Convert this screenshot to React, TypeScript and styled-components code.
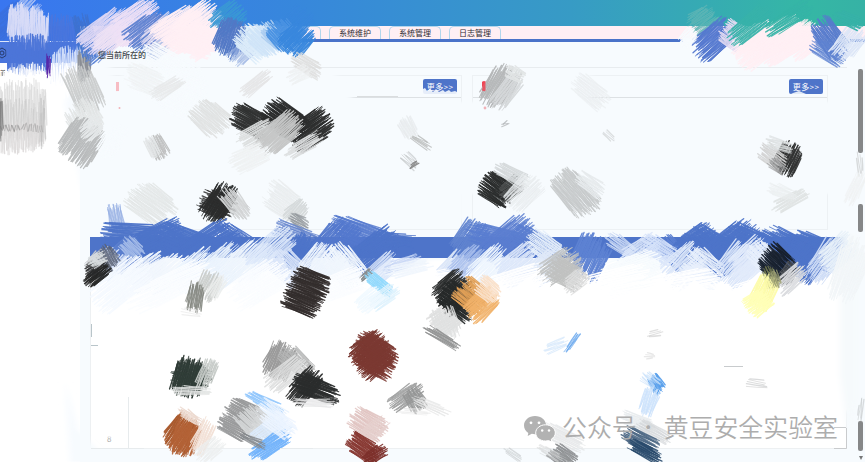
import React from 'react';
import styled, { createGlobalStyle } from 'styled-components';

const GlobalStyle = createGlobalStyle`
  * { box-sizing: border-box; }
  body { margin: 0; overflow: hidden; background: #fff; font-family: "Noto Sans CJK SC", sans-serif; }
`;
const Page = styled.div`
  position: relative; width: 865px; height: 462px; overflow: hidden;
  display: flex; flex-direction: column; background: #fff;
`;
const Header = styled.header`
  height: 26px; flex: none;
  background: linear-gradient(90deg, #3976f0 0%, #3787dc 34%, #379bc5 66%, #35b7a5 93%, #36b2a5 100%);
`;
const Body = styled.div` flex: 1; min-height: 0; display: flex; `;
const Sidebar = styled.aside`
  width: 80px; flex: none; background: #fff; font-size: 6px; color: #555;
`;
const SideTop = styled.div` height: 16px; background: #3b73e5; border-bottom: 1px solid #dde6fa; `;
const SideTitle = styled.div`
  height: 21px; background: #4b76dc; display: flex; align-items: center;
  svg { margin-left: -3px; }
`;
const SideText = styled.div` margin: 4px 0 0; line-height: 11px; `;
const Content = styled.div` flex: 1; min-width: 0; display: flex; flex-direction: column; background: #f7fbfe; `;
const Tabs = styled.nav`
  height: 16px; flex: none; display: flex; align-items: flex-end; gap: 8px; padding-left: 189px;
  background: #ffeff4; border-bottom: 3px solid #4a73c9;
`;
const Tab = styled.div`
  width: 52px; height: 13px; border: 1px solid #b2d6ec; border-bottom: 0; border-radius: 5px 5px 0 0;
  display: flex; align-items: center; justify-content: center;
  font-size: 8px; line-height: 12px; color: #302b31; white-space: nowrap; font-weight: 400;
`;
const Main = styled.div` display: flex; flex: 1; min-height: 0; `;
const Work = styled.main` width: 767px; padding-left: 10px; display: flex; flex-direction: column; flex: none; `;
const Crumb = styled.div`
  height: 26px; flex: none; border-bottom: 1px solid #e8ecef; padding-left: 8px;
  font-size: 8px; line-height: 25px; color: #45494d; font-weight: 500;
  span { position: relative; z-index: 1; }
`;
const Panels = styled.section` display: flex; gap: 10px; padding: 7px 19px 7px 16px; height: 169px; flex: none; `;
const Panel = styled.div` width: 356px; height: 155px; border: 1px solid #edf1f4; `;
const PanelHead = styled.div`
  height: 22px; border-bottom: 1px solid #dde1e4; display: flex; align-items: center;
  justify-content: space-between; padding: 0 4px 0 9px;
`;
const Mark = styled.i<{ $tone: string }>` width: 3px; height: 10px; background: ${p => p.$tone}; `;
const More = styled.button`
  height: 15px; width: 34px; border: 0; border-radius: 2px; background: #4e74c9; color: #fff;
  font: 400 8px/15px "Noto Sans CJK SC", sans-serif; padding: 0; white-space: nowrap; letter-spacing: .4px;
`;
const Band = styled.div` height: 21px; flex: none; background: #4e74c9; `;
const Table = styled.div`
  margin-top: 5px; height: 186px; border: 1px solid #edf0f2; background: #fff;
  display: flex; align-items: flex-end; padding: 0 0 4px 16px; font-size: 8px; color: #aaa;
`;
const ScrollRail = styled.div` flex: 1; display: flex; flex-direction: column; align-items: center; padding: 27px 0 0 9px; `;
const Thumb = styled.i<{ $h: number; $gap: number }>`
  width: 5px; height: ${p => p.$h}px; margin-bottom: ${p => p.$gap}px; border-radius: 2px; background: #868788; flex: none;
`;
const Down = styled.i` border: 2.5px solid transparent; border-top: 4px solid #777; `;
const Overlay = styled.svg` position: absolute; inset: 0; pointer-events: none; `;
const Brand = styled.div`
  position: absolute; left: 524px; top: 410px; display: flex; align-items: center; gap: 6px;
  height: 36px; color: #adadad; font-size: 24.9px; line-height: 36px; white-space: pre;
`;
const BrandName = styled.span` display: flex; font-weight: 350; transform: translateY(-2px); `;
const Dot = styled.span` width: 27px; text-align: center; padding-right: 4px; font-size: 18px; `;

/* x, y, spread across the hatch, length along it, angle in degrees, color, opacity, pitch */
type Smear = [number, number, number, number, number, string, number?, number?];

const rng = (seed: number) => () => {
  seed = (seed * 16807) % 2147483647;
  return seed / 2147483647;
};

function Hatch({ s, seed }: { s: Smear; seed: number }) {
  const [x, y, spread, length, angle, color, opacity = 1, pitch = 1] = s;
  const rand = rng(seed * 7919 + 31);
  rand();
  const skew = (rand() - 0.5) * 0.4;
  const bundles = ['', '', ''];
  let k = 0;
  for (let t = -spread / 2; t <= spread / 2; t += pitch * 0.82) {
    const edge = Math.abs(t) / (spread / 2);
    const half = (length / 2) * (1 - 0.25 * Math.pow(edge, 4));
    const a = -half + (rand() - 0.3) * length * 0.25 + t * skew;
    const b = half - (rand() - 0.3) * length * 0.25 + t * skew;
    const bend = (rand() - 0.5) * 2.6;
    const mid = (a + b) / 2;
    bundles[k++ % 3] += `M${a.toFixed(1)} ${(t + bend).toFixed(1)}Q${mid.toFixed(1)} ${(t + rand() - 0.5).toFixed(1)} ${b.toFixed(1)} ${(t - bend).toFixed(1)}`;
  }
  return (
    <g transform={`translate(${x} ${y}) rotate(${angle})`} stroke={color} strokeLinecap="round" fill="none">
      <path d={bundles[0]} strokeWidth={1.35} strokeOpacity={opacity * 0.95} />
      <path d={bundles[1]} strokeWidth={0.9} strokeOpacity={opacity * 0.85} />
      <path d={bundles[2]} strokeWidth={1.1} strokeOpacity={opacity * 0.9} />
    </g>
  );
}

const W = '#fff';
const P = '#f7fbfe';
const B = '#4e74c9';
const K = '#2a2c2c';

const headerSmears: Smear[] = [
  [9, 20, 22, 40, -40, '#3b6fd9', .7], [27, 13, 26, 28, -48, '#a9c0f5', .8],
  [28, 27, 40, 40, 90, '#d8dcf7', 1, .7], [28, 55, 42, 37, 90, '#4d75d8', 1, .7],
  [62, 35, 27, 37, 90, '#4b76dc', .9], [63, 66, 25, 34, 90, '#d5e1fb'],
  [64, 80, 30, 32, 90, W], [48, 66, 4, 22, 90, '#5524a5'],
  [84, 65, 13, 32, 90, '#868a91'], [85, 36, 18, 42, 75, '#3e72cf'],
  [98, 46, 24, 36, -40, '#5b83d6', .8],
  [106, 31, 28, 53, -38, '#dcd6f4', 1, .8], [112, 38, 22, 38, -38, '#eee2f4'],
  [135, 23, 32, 50, -35, '#eee0f5', 1, .8],
  [147, 31, 28, 42, -38, '#5f82d0'], [163, 34, 27, 42, -42, '#e2dcf2', .9],
  [158, 50, 14, 22, -40, '#a9bde4', .6], [180, 31, 38, 49, -33, '#ffeff4', 1, .7],
  [201, 30, 46, 48, -38, '#ffeff4', 1, .6], [196, 40, 30, 42, 15, '#ffeff4', 1, .7],
  [228, 18, 25, 34, -40, '#3a98d4'], [230, 38, 28, 36, -70, '#5278c5', 1, .7],
  [243, 53, 18, 26, -45, '#9db5e2', .7],
  [254, 43, 28, 36, 40, '#dcecfa', 1, .8], [264, 40, 25, 34, 45, '#cfe4f8'],
  [272, 35, 17, 22, 45, '#a9cbf0'], [294, 24, 25, 35, -45, '#3987dd', .8],
  [284, 36, 26, 32, 45, '#4a92e2', 1, .8], [297, 39, 28, 30, -45, '#3987dd', 1, .7],
  [703, 21, 25, 27, -35, '#5fb6b6', .8], [714, 40, 27, 43, -42, '#5478cf', 1, .75],
  [733, 35, 25, 25, 35, '#e1daf1'], [757, 45, 35, 46, -35, '#ffeff4', 1, .7],
  [782, 40, 36, 46, -30, '#ffeff4', 1, .65], [802, 40, 31, 38, -40, '#ffeff4', 1, .7],
  [750, 26, 20, 47, -38, '#38b2aa'], [790, 18, 16, 50, -32, '#36b4a7'],
  [830, 38, 24, 40, 55, '#567bcc', 1, .75], [828, 53, 16, 36, 32, '#5f83d1', .85],
  [849, 43, 23, 35, -50, '#dce6f7'],
  [848, 20, 13, 28, 25, '#37b2a8'], [688, 38, 14, 20, -45, P],
];
const upperSmears: Smear[] = [
  [23, 84, 44, 35, 90, W], [23, 108, 46, 52, 90, '#dcdcdc', .8],
  [22, 124, 45, 44, 90, '#c2c2c2', .45, 1.6], [22, 137, 42, 30, 90, '#dddada', .8],
  [10, 128, 18, 6, 90, '#777', .5, 2.4], [32, 128, 20, 8, 90, '#777', .4, 2.6],
  [42, 124, 6, 55, 90, '#bbb', .6, 1.5], [1, 117, 3, 42, 90, '#777', .8],
  [84, 90, 30, 46, 68, '#c8caca', .9],
  [85, 120, 32, 36, 60, '#e3e6e6'], [82, 142, 38, 40, -55, '#b8babb', 1, .8],
  [92, 129, 18, 24, -40, '#e6e9ea'],
  [112, 142, 20, 36, -55, P], [163, 77, 52, 65, 30, P], [180, 94, 45, 52, 25, P],
  [158, 147, 16, 23, 60, '#bfc0c0'], [152, 147, 10, 20, 65, '#e3e6e7'],
  [145, 80, 24, 37, 25, '#eff2f3', .65], [168, 88, 13, 34, -30, '#e7e9ea', .9],
  [256, 84, 12, 34, -38, '#e4e4e5', .9], [306, 65, 16, 32, 30, '#dddddc', .8],
  [300, 74, 14, 24, -30, '#eef0f1', .7],
  [210, 118, 30, 36, 40, '#e0e2e2'], [250, 121, 25, 36, 28, '#303131', 1, .65],
  [284, 120, 30, 42, 35, '#2a2b2b', 1, .65], [311, 130, 29, 42, -35, '#2c2d2d', 1, .65],
  [258, 134, 20, 40, -30, '#dcdede'], [280, 133, 26, 46, -42, '#c5c6c6', 1, .7],
  [304, 146, 13, 38, -32, '#dddfe0'], [250, 158, 22, 38, -25, '#eff2f3'],
  [408, 128, 15, 22, 60, '#e6e9eb', .7], [421, 142, 7, 22, 30, '#a8a9a8', .7, 1.6],
  [410, 161, 11, 18, 40, '#c2c5c6', .7, 2], [414, 165, 3, 10, -45, '#888'],
  [500, 86, 28, 42, -60, '#b5b7b8', 1, .8],
  [507, 92, 18, 38, -55, '#d5d8da'], [515, 74, 13, 20, 30, '#e2e5e6'],
  [590, 92, 22, 39, 38, '#ebeff1', .8], [609, 136, 6, 12, 35, '#c5c8c9', .6, 2.2],
  [788, 159, 24, 30, -65, '#303131', 1, .7], [772, 157, 18, 28, 38, '#d1d2d2', .9],
  [779, 145, 11, 26, 15, '#dce0e1', .8], [777, 166, 10, 20, 40, '#9a9b9c', .7],
  [790, 201, 13, 36, -30, '#dfe3e3', .95], [782, 192, 12, 28, 20, '#eaeeef', .7],
  [151, 204, 34, 44, 35, '#e3e6e6', .9], [219, 203, 24, 38, -58, K, 1, .65],
  [217, 205, 24, 34, 25, '#2c2d2d', .9], [235, 204, 18, 34, 50, '#d2d4d5'],
  [284, 202, 28, 40, 35, '#e8ebed', .8], [296, 213, 18, 25, -48, '#d5d9da'],
  [299, 222, 12, 20, 35, '#90959a', .75], [497, 190, 27, 32, 35, K, 1, .65],
  [511, 189, 18, 24, -35, '#515454', .75], [512, 175, 14, 34, 30, '#d5d9db'],
  [524, 193, 26, 36, -45, '#e9edef', .8], [575, 193, 30, 48, 50, '#c7cacb', 1, .8],
  [590, 184, 15, 28, 35, '#e6eaec'], [505, 124, 3, 8, -20, '#a5a8aa', .7, 1.6],
];
const bandSmears: Smear[] = [
  [116, 219, 14, 28, 80, '#98b1e4', .85], [133, 238, 28, 58, 5, B, 1, .7],
  [157, 243, 34, 56, -25, B, 1, .65], [187, 242, 26, 58, 22, B, 1, .65],
  [209, 244, 30, 56, -32, B, 1, .65], [236, 238, 18, 44, 35, B],
  [125, 255, 26, 34, -38, '#5d81cf'],
  [297, 236, 18, 46, 22, '#6282cc', .85], [301, 254, 26, 38, -65, B, 1, .7],
  [337, 240, 32, 42, -48, '#5378cc', 1, .8], [363, 235, 24, 63, 20, '#5479ce', .9, .8],
  [374, 252, 30, 54, -37, B, 1, .7], [399, 240, 12, 34, 5, B],
  [470, 239, 28, 38, -55, '#6184cf', .95, .8], [498, 239, 22, 62, 15, '#597dd0', .9, .8],
  [505, 239, 24, 56, -40, '#5b7ed0', .9, .8], [532, 241, 22, 48, 27, '#5b7ed0'],
  [590, 257, 34, 40, -65, '#5e83d3', 1, .8], [674, 254, 20, 36, 50, '#5b80d1'],
  [696, 245, 30, 44, -35, B, 1, .7], [710, 250, 36, 54, 32, B, 1, .7],
  [733, 248, 38, 58, -38, B, 1, .65], [756, 247, 30, 60, 25, B, 1, .65],
  [788, 252, 36, 60, 28, B, 1, .65], [812, 250, 30, 48, 22, B, 1, .7],
  [806, 262, 34, 34, -50, B, 1, .7], [108, 264, 25, 32, -48, '#dce7fa'],
  [132, 249, 18, 24, 45, '#a5bce9'], [148, 272, 28, 43, -35, '#eff5fd'],
  [170, 274, 30, 48, -40, '#f2f7fd'], [196, 270, 28, 48, -42, '#edf5fe'],
  [224, 267, 34, 44, -42, '#eaf3fd'], [251, 260, 33, 46, -42, '#eef5fd'],
  [271, 250, 26, 52, -42, '#dce8fa', .95], [288, 268, 28, 38, 45, '#dae5f9'],
  [321, 266, 36, 44, -52, '#edf4fd', 1, .85], [345, 266, 30, 43, 50, '#f0f6fd', 1, .85],
  [382, 270, 20, 36, -45, '#dbe6fa', .9], [402, 264, 10, 36, -20, '#c6d5f4', .8],
  [408, 269, 13, 46, -15, '#f0f6fd', .9],
  [452, 267, 18, 32, -50, '#d9e5f8'], [467, 262, 20, 36, -45, '#a9bfec', .9],
  [490, 268, 30, 44, -45, '#edf5fe'], [518, 266, 30, 44, -40, '#dce7fa'],
  [546, 248, 23, 40, 35, '#e6effb'], [547, 267, 26, 36, -43, '#dfe9f8'],
  [622, 246, 14, 34, 35, '#cbdaf5', .9], [639, 251, 19, 42, -35, '#dbe6fa', .95],
  [645, 264, 18, 47, -15, '#f1f7fd'], [660, 250, 20, 40, 30, '#d5e2fa', .95],
  [631, 274, 35, 60, -20, '#f8fcfe'],
  [684, 266, 32, 42, -45, '#dde8fa'], [704, 268, 30, 40, 38, '#e8f0fc'],
  [738, 265, 34, 42, -50, '#d9e5f9'], [750, 260, 30, 42, -40, '#e2ebfb'],
  [764, 258, 24, 34, 45, '#e8f0fc'], [826, 260, 24, 46, -55, '#cddbf6'],
  [838, 253, 26, 38, -40, '#e8f1f9'], [850, 270, 30, 60, -70, '#f2f6f8'],
];
const lowerSmears: Smear[] = [
  [121, 284, 33, 61, -38, '#f5faff'], [171, 286, 26, 85, -24, '#fbfdff'],
  [259, 284, 32, 59, -32, '#fbfdff'], [340, 285, 24, 53, -20, '#fbfdff'],
  [430, 286, 26, 64, -10, W], [519, 285, 32, 69, -15, W],
  [618, 289, 40, 63, -12, W], [684, 292, 40, 75, -10, W], [765, 296, 38, 71, -15, W],
  [98, 264, 20, 25, -45, '#c6c9cd'], [108, 258, 18, 22, 55, '#5b6376', .85],
  [98, 275, 13, 28, -38, '#252626', 1, .7], [92, 269, 13, 14, -28, '#2a2b2c', .8],
  [97, 260, 12, 18, -25, '#d8dddf'],
  [209, 286, 22, 28, -65, '#c9ccca', .9], [195, 297, 16, 27, 100, '#858882', .95],
  [217, 287, 13, 24, -60, '#eceeed', .8], [306, 292, 44, 37, 22, '#322c2b', 1, .65],
  [366, 275, 5, 14, -40, '#85898a'], [379, 284, 12, 32, 40, '#8ed8fc'],
  [384, 297, 15, 31, -35, '#def2fd', .9], [370, 300, 18, 28, -40, '#f0f9ff', .9],
  [448, 318, 26, 34, -35, '#dadbdb', .75], [454, 292, 34, 36, -40, K, 1, .7],
  [458, 301, 28, 38, 35, '#262929', 1, .7], [472, 296, 29, 32, 40, '#e1a057', .97, .7],
  [482, 305, 24, 33, -42, '#f1b26a', .95, .8], [488, 290, 20, 25, 40, '#fae0c9'],
  [446, 324, 24, 33, 70, '#e0e1e1', .9], [442, 338, 9, 38, 32, '#929393'],
  [560, 266, 26, 40, -35, '#bfc1c1', .9], [566, 274, 24, 35, 30, '#c0c1c0'],
  [576, 281, 17, 26, -42, '#dcdddd', .9], [777, 264, 30, 33, 42, '#17202d', 1, .65],
  [788, 274, 14, 24, -55, '#55585c', .8], [792, 279, 18, 32, -42, '#dadcdf'],
  [770, 279, 11, 23, 70, '#757b51', .8], [764, 293, 22, 34, -65, '#fdfba8', .95, .8],
  [758, 303, 22, 24, -35, '#ffffb8', 1, .8], [775, 279, 9, 17, 65, '#a1a477', .8],
  [372, 355, 38, 38, -38, '#75362f', 1, .65], [375, 356, 35, 42, 30, '#7b3932', 1, .65],
  [189, 377, 30, 37, -75, '#2c3833', 1, .7], [191, 376, 22, 36, 10, '#303d38', .9],
  [207, 374, 15, 28, -70, '#c5cac7'], [192, 391, 9, 38, 0, '#e3e5e4', .9],
  [182, 434, 30, 34, -55, '#a9592c', 1, .7], [186, 437, 25, 34, -75, '#b46337', .95],
  [190, 417, 9, 25, 33, '#ecd9cf'], [203, 437, 16, 35, -65, '#f2e0d6'],
  [210, 450, 18, 28, -45, '#eceeee', .8], [280, 361, 28, 34, -65, '#999', 1, .8],
  [296, 361, 20, 34, 40, '#b4b5b5', .9], [286, 374, 20, 44, -40, '#dddede', .9],
  [305, 387, 22, 38, -50, '#303131', 1, .7], [316, 389, 20, 44, 20, K, 1, .7],
  [314, 403, 8, 38, 5, '#e7e8e9', .8], [264, 402, 10, 38, 28, '#8cc4fd', .9],
  [273, 416, 22, 32, 35, '#e8f2fe'], [239, 419, 38, 32, 30, '#999a9b', 1, .75],
  [256, 424, 27, 38, 45, '#d3d5d6', 1, .8], [270, 432, 22, 38, -35, '#dcebfd', .9],
  [270, 446, 17, 40, -33, '#72b3fb', 1, .8], [279, 424, 20, 34, 35, '#edf5ff', .9],
  [253, 441, 7, 26, 25, '#85898d', .9],
  [368, 424, 24, 36, 32, '#dfc2bf', .9], [370, 434, 16, 42, -40, '#e5d0ce', .9],
  [363, 448, 20, 32, 34, '#873832', 1, .75], [375, 455, 13, 25, -30, '#7c302b'],
  [406, 397, 17, 36, -35, '#a2a3a3'], [415, 400, 18, 22, 60, '#959696', .9],
  [430, 406, 9, 38, 25, '#e4e5e5', .8, 1.3], [415, 412, 6, 30, 5, '#e9e9e9', .7, 1.6],
  [572, 343, 4, 24, -52, '#6aa8ed', .9, 1.2], [556, 346, 10, 24, -20, '#d6e8fb', .8, 1.4],
  [656, 384, 13, 17, 55, '#569eeb', 1, .8], [649, 402, 15, 28, -70, '#cbe2fb', .9],
  [650, 380, 12, 18, 40, '#c9e1fb', .7, 1.3], [638, 422, 13, 32, 22, '#e8ebee', .9],
  [653, 431, 12, 36, 30, '#d4d7da', .8], [640, 440, 16, 36, 28, '#506a86', 1, .8],
  [645, 451, 12, 34, 28, '#294a6c', .95, .8], [564, 438, 16, 44, 28, '#e4e6e7', .8],
  [562, 456, 18, 25, 35, '#8f9193', .95, .8], [550, 454, 9, 28, 28, '#d4d6d7', .6, 1.4],
  [513, 455, 7, 22, 35, '#bfc3c5', .6, 1.8], [757, 384, 9, 20, 5, '#9fa1a2', .4, 2.3],
  [655, 334, 7, 15, -15, '#aaa', .4, 2.2], [650, 356, 5, 10, 15, '#ccc', .5, 2],
  [192, 313, 7, 20, 10, '#ddd', .5, 2.5], [860, 165, 5, 24, 85, '#c3c4c5', .65, 2],
  [856, 188, 12, 33, -65, '#f0f2f3', .8], [861, 410, 5, 24, -85, '#c0c3c5', .6, 1.6],
];

export default function App() {
  const all = [...headerSmears, ...upperSmears, ...bandSmears, ...lowerSmears];
  return (
    <Page>
      <GlobalStyle />
      <Header />
      <Body>
        <Sidebar>
          <SideTop />
          <SideTitle>
            <svg width="10" height="12" viewBox="0 0 10 12" fill="none" stroke="#273b6b"><path d="M5 1L9 3.5V8.5L5 11L1 8.5V3.5Z" /><circle cx="5" cy="6" r="2" /></svg>
          </SideTitle>
          <SideText>首</SideText>
        </Sidebar>
        <Content>
          <Tabs><Tab>业务</Tab><Tab>系统维护</Tab><Tab>系统管理</Tab><Tab>日志管理</Tab></Tabs>
          <Main>
            <Work>
              <Crumb><span>您当前所在的</span></Crumb>
              <Panels>
                <Panel><PanelHead><Mark $tone="#f7bdc4" /><More>更多&gt;&gt;</More></PanelHead></Panel>
                <Panel><PanelHead><Mark $tone="#ee4656" /><More>更多&gt;&gt;</More></PanelHead></Panel>
              </Panels>
              <Band />
              <Table>8</Table>
            </Work>
            <ScrollRail><Thumb $h={84} $gap={51} /><Thumb $h={28} $gap={189} /><Thumb $h={30} $gap={5} /><Down /></ScrollRail>
          </Main>
        </Content>
      </Body>
      <Overlay width="865" height="462" viewBox="0 0 865 462">
        <defs><filter id="soft"><feGaussianBlur stdDeviation="3 1.2" /></filter></defs>
        <g filter="url(#soft)">
          <path d="M78 46L65 105L80 178L90 225L121 225L113 120L113 70L95 50Z" fill={P} />
          <path d="M125 71H335L342 94H352V101H410V200L402 226H90L112 200V95Z" fill={P} />
          <path d="M396 102H466V220H396Z" fill={P} />
          <path d="M495 71H590V102H835V194H466V102H495Z" fill={P} />
          <path d="M98 262H395L410 266H422L430 260H852V405L806 437H100Z" fill={W} />
          <path d="M65 380L78 430L110 462H70Z" fill={P} />
          <path d="M840 234H856V400L848 435L840 375Z" fill="#f6fafc" />
        </g>
        <path d="M90 237H838V258H90Z" fill={B} />
        <path d="M683 38H850V45H683ZM80 27H302V45H80Z" fill={P} />
        <path d="M720 27H826V46L735 52ZM90 27H225V46H90Z" fill="#ffeff4" />
        {all.map((s, i) => <Hatch key={i} s={s} seed={i + 1} />)}
        <g fill="none" strokeWidth="1">
          <path d="M91.5 324V337M91 345.5H98" stroke="#b9c5ca" />
          <path d="M128.5 397V448M91 448.5H144M280 448.5H313" stroke="#e7ebed" />
          <path d="M846.5 428V448.5H834M834 427.5H846" stroke="#c9cbcd" />
          <path d="M724 366.5H743" stroke="#c8cbcd" />
          <path d="M357 96.5H398" stroke="#dadddf" />
        </g>
        <path d="M423 89L425 88L427 91L430 89L433 92L436 89L439 92L443 90L445 92L449 90L451 92L455 91L457 92V94H423Z" fill={P} fillOpacity=".9" />
        <path d="M793 93L799 91L806 94H791Z" fill="#e1eaf6" />
        <g fill="#f1b2b8"><circle cx="119.5" cy="108" r="1" /><circle cx="485" cy="108" r="1.4" /></g>
        <path d="M482.5 81H485.5V91H482.5Z" fill="#ee4656" fillOpacity=".85" />
        <path d="M116 82H119V91H116Z" fill="#f7bdc4" />
      </Overlay>
      <Brand>
        <svg width="32" height="27" viewBox="0 0 32 27">
          <path d="M11 1C4.8 1 0 5.2 0 10.4c0 3.1 1.7 5.8 4.3 7.5L3.7 21l4.1-2.2c1 .3 2.1.4 3.3.4 6.2 0 11-4 11-8.9C22.1 5.2 17.2 1 11 1Z" fill="#b2b2b2" />
          <path d="M21.5 9.8c-5.5 0-9.8 3.6-9.8 8.1s4.3 8.1 9.8 8.1c1 0 2-.1 3-.4l3.4 1.4-.6-2.8c2.5-1.5 4-3.7 4-6.3 0-4.5-4.3-8.1-9.8-8.1Z" fill="#b2b2b2" stroke="#fff" />
          <g fill="#fff"><circle cx="7" cy="7.8" r="1.4" /><circle cx="15" cy="7.8" r="1.4" /><circle cx="18.2" cy="15.5" r="1.2" /><circle cx="25" cy="15.5" r="1.2" /></g>
        </svg>
        <BrandName><span>公众号</span><Dot>·</Dot><span>黄豆安全实验室</span></BrandName>
      </Brand>
    </Page>
  );
}
